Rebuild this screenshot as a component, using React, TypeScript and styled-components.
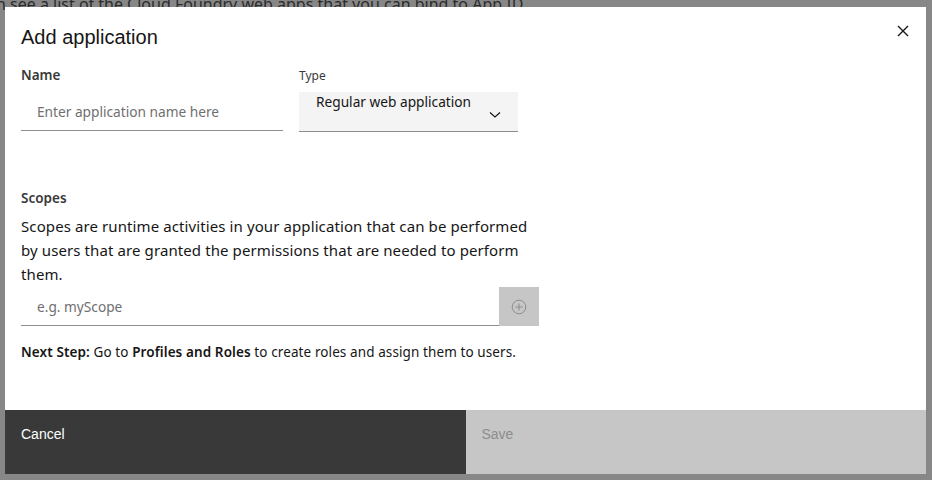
import styled, { createGlobalStyle } from 'styled-components';

const GlobalStyle = createGlobalStyle`
  html, body {
    margin: 0;
    padding: 0;
    width: 932px;
    height: 480px;
    overflow: hidden;
    background: #878787;
  }
`;

const BODY_FONT = `"Noto Sans", "Liberation Sans", Arial, sans-serif`;
const HEAD_FONT = `"Liberation Sans", Arial, sans-serif`;

const Page = styled.div`
  position: relative;
  width: 932px;
  height: 480px;
  overflow: hidden;
  background: #878787;
  font-family: ${BODY_FONT};
  color: #2a2a2a;
`;

const BackText = styled.p`
  margin: -6px 0 0 -4px;
  font-size: 16px;
  line-height: 20px;
  white-space: nowrap;
  color: #2b2b2b;
`;

const BackColumn = styled.div`
  display: flex;
  flex-direction: column;
  margin: 146px 0 0 -8px;
  font-size: 12px;
  line-height: 15px;
  color: #3a3a3a;
`;

const Overlay = styled.div`
  position: absolute;
  inset: 0;
  display: flex;
  padding: 7px 6px 6px 5px;
  box-sizing: border-box;
`;

const Modal = styled.div`
  flex: 1;
  display: flex;
  flex-direction: column;
  background: #ffffff;
`;

const Header = styled.div`
  display: flex;
  justify-content: space-between;
  align-items: flex-start;
  height: 26px;
  padding: 17px 16px 0 16px;
`;

const Title = styled.h2`
  margin: 0;
  font-family: ${HEAD_FONT};
  font-weight: 400;
  font-size: 20px;
  line-height: 26px;
  color: #161616;
`;

const CloseButton = styled.button`
  width: 24px;
  height: 24px;
  margin-top: -5px;
  margin-right: -5px;
  padding: 0;
  border: none;
  background: transparent;
  display: flex;
  align-items: center;
  justify-content: center;
`;

const Body = styled.div`
  flex: 1;
  display: flex;
  flex-direction: column;
  padding: 0 16px;
`;

const FieldRow = styled.div`
  display: flex;
  gap: 16px;
  margin-top: 17px;
`;

const Field = styled.div<{ $width: number }>`
  display: flex;
  flex-direction: column;
  width: ${(p) => p.$width}px;
`;

const Label = styled.label<{ $bold?: boolean; $gap: number }>`
  font-family: ${BODY_FONT};
  font-size: ${(p) => (p.$bold ? 13.5 : 12)}px;
  font-weight: ${(p) => (p.$bold ? 600 : 400)};
  line-height: 16px;
  color: #393939;
  margin-bottom: ${(p) => p.$gap}px;
  margin-top: ${(p) => (p.$bold ? 0 : 1)}px;
`;

const TextInput = styled.input`
  box-sizing: border-box;
  width: 100%;
  height: 39px;
  padding: 0 16px;
  border: none;
  border-bottom: 1px solid #8d8d8d;
  background: #ffffff;
  font-family: ${BODY_FONT};
  font-size: 13.7px;
  color: #161616;
  outline: none;
  &::placeholder {
    color: #6f6f6f;
  }
`;

const Select = styled.div`
  box-sizing: border-box;
  height: 40px;
  display: flex;
  justify-content: space-between;
  padding: 0 17px 0 17px;
  background: #f4f4f4;
  border-bottom: 1px solid #8d8d8d;
  font-family: ${BODY_FONT};
  font-size: 13.7px;
  line-height: 20px;
  color: #161616;
`;

const Chevron = styled.span`
  display: flex;
  align-items: center;
  padding-top: 7px;
`;

const Section = styled.div`
  display: flex;
  flex-direction: column;
  width: 518px;
  margin-top: 58px;
`;

const Description = styled.p`
  margin: 0;
  font-size: 15px;
  letter-spacing: 0.1px;
  line-height: 24px;
  color: #161616;
`;

const ScopeRow = styled.div`
  display: flex;
  margin-top: 1px;
`;

const ScopeInput = styled(TextInput)`
  flex: 1;
`;

const AddButton = styled.button`
  width: 40px;
  height: 39px;
  padding: 0;
  border: none;
  background: #c6c6c6;
  display: flex;
  align-items: center;
  justify-content: center;
`;

const NextStep = styled.p`
  margin: 17px 0 0 0;
  font-size: 13.5px;
  letter-spacing: 0.1px;
  line-height: 18px;
  color: #161616;
  b {
    font-weight: 600;
  }
`;

const Footer = styled.div`
  display: grid;
  grid-template-columns: 1fr 1fr;
  height: 64px;
`;

const FooterButton = styled.button<{ $primary?: boolean }>`
  border: none;
  margin: 0;
  padding: 14px 16px 0 16px;
  text-align: left;
  display: flex;
  align-items: flex-start;
  font-family: ${HEAD_FONT};
  font-size: 14px;
  line-height: 20px;
  background: ${(p) => (p.$primary ? '#c6c6c6' : '#393939')};
  color: ${(p) => (p.$primary ? '#8d8d8d' : '#ffffff')};
`;

const App = () => {
  return (
    <>
      <GlobalStyle />
      <Page>
        <BackText>n see a list of the Cloud Foundry web apps that you can bind to App ID.</BackText>
        <BackColumn>
          <span>a</span>
          <span>2</span>
          <span>0</span>
          <span>&nbsp;</span>
          <span>:</span>
          <span>a</span>
          <span>t</span>
        </BackColumn>
        <Overlay>
          <Modal>
            <Header>
              <Title>Add application</Title>
              <CloseButton aria-label="Close">
                <svg width="12" height="12" viewBox="0 0 12 12">
                  <path d="M1 1 L11 11 M11 1 L1 11" stroke="#161616" strokeWidth="1.4" />
                </svg>
              </CloseButton>
            </Header>
            <Body>
              <FieldRow>
                <Field $width={262}>
                  <Label $bold $gap={9}>Name</Label>
                  <TextInput placeholder="Enter application name here" />
                </Field>
                <Field $width={219}>
                  <Label $gap={8}>Type</Label>
                  <Select>
                    <span>Regular web application</span>
                    <Chevron>
                      <svg width="12" height="8" viewBox="0 0 12 8">
                        <path d="M1 1.5 L6 6 L11 1.5" stroke="#161616" strokeWidth="1.2" fill="none" />
                      </svg>
                    </Chevron>
                  </Select>
                </Field>
              </FieldRow>
              <Section>
                <Label $bold $gap={8}>Scopes</Label>
                <Description>
                  Scopes are runtime activities in your application that can be performed by users that are granted
                  the permissions that are needed to perform them.
                </Description>
                <ScopeRow>
                  <ScopeInput placeholder="e.g. myScope" />
                  <AddButton aria-label="Add scope">
                    <svg width="16" height="16" viewBox="0 0 16 16">
                      <circle cx="8" cy="8" r="6.8" stroke="#8d8d8d" strokeWidth="1" fill="none" />
                      <path d="M8 4.5 V11.5 M4.5 8 H11.5" stroke="#8d8d8d" strokeWidth="1" />
                    </svg>
                  </AddButton>
                </ScopeRow>
              </Section>
              <NextStep>
                <b>Next Step:</b> Go to <b>Profiles and Roles</b> to create roles and assign them to users.
              </NextStep>
            </Body>
            <Footer>
              <FooterButton>Cancel</FooterButton>
              <FooterButton $primary>Save</FooterButton>
            </Footer>
          </Modal>
        </Overlay>
      </Page>
    </>
  );
};

export default App;
